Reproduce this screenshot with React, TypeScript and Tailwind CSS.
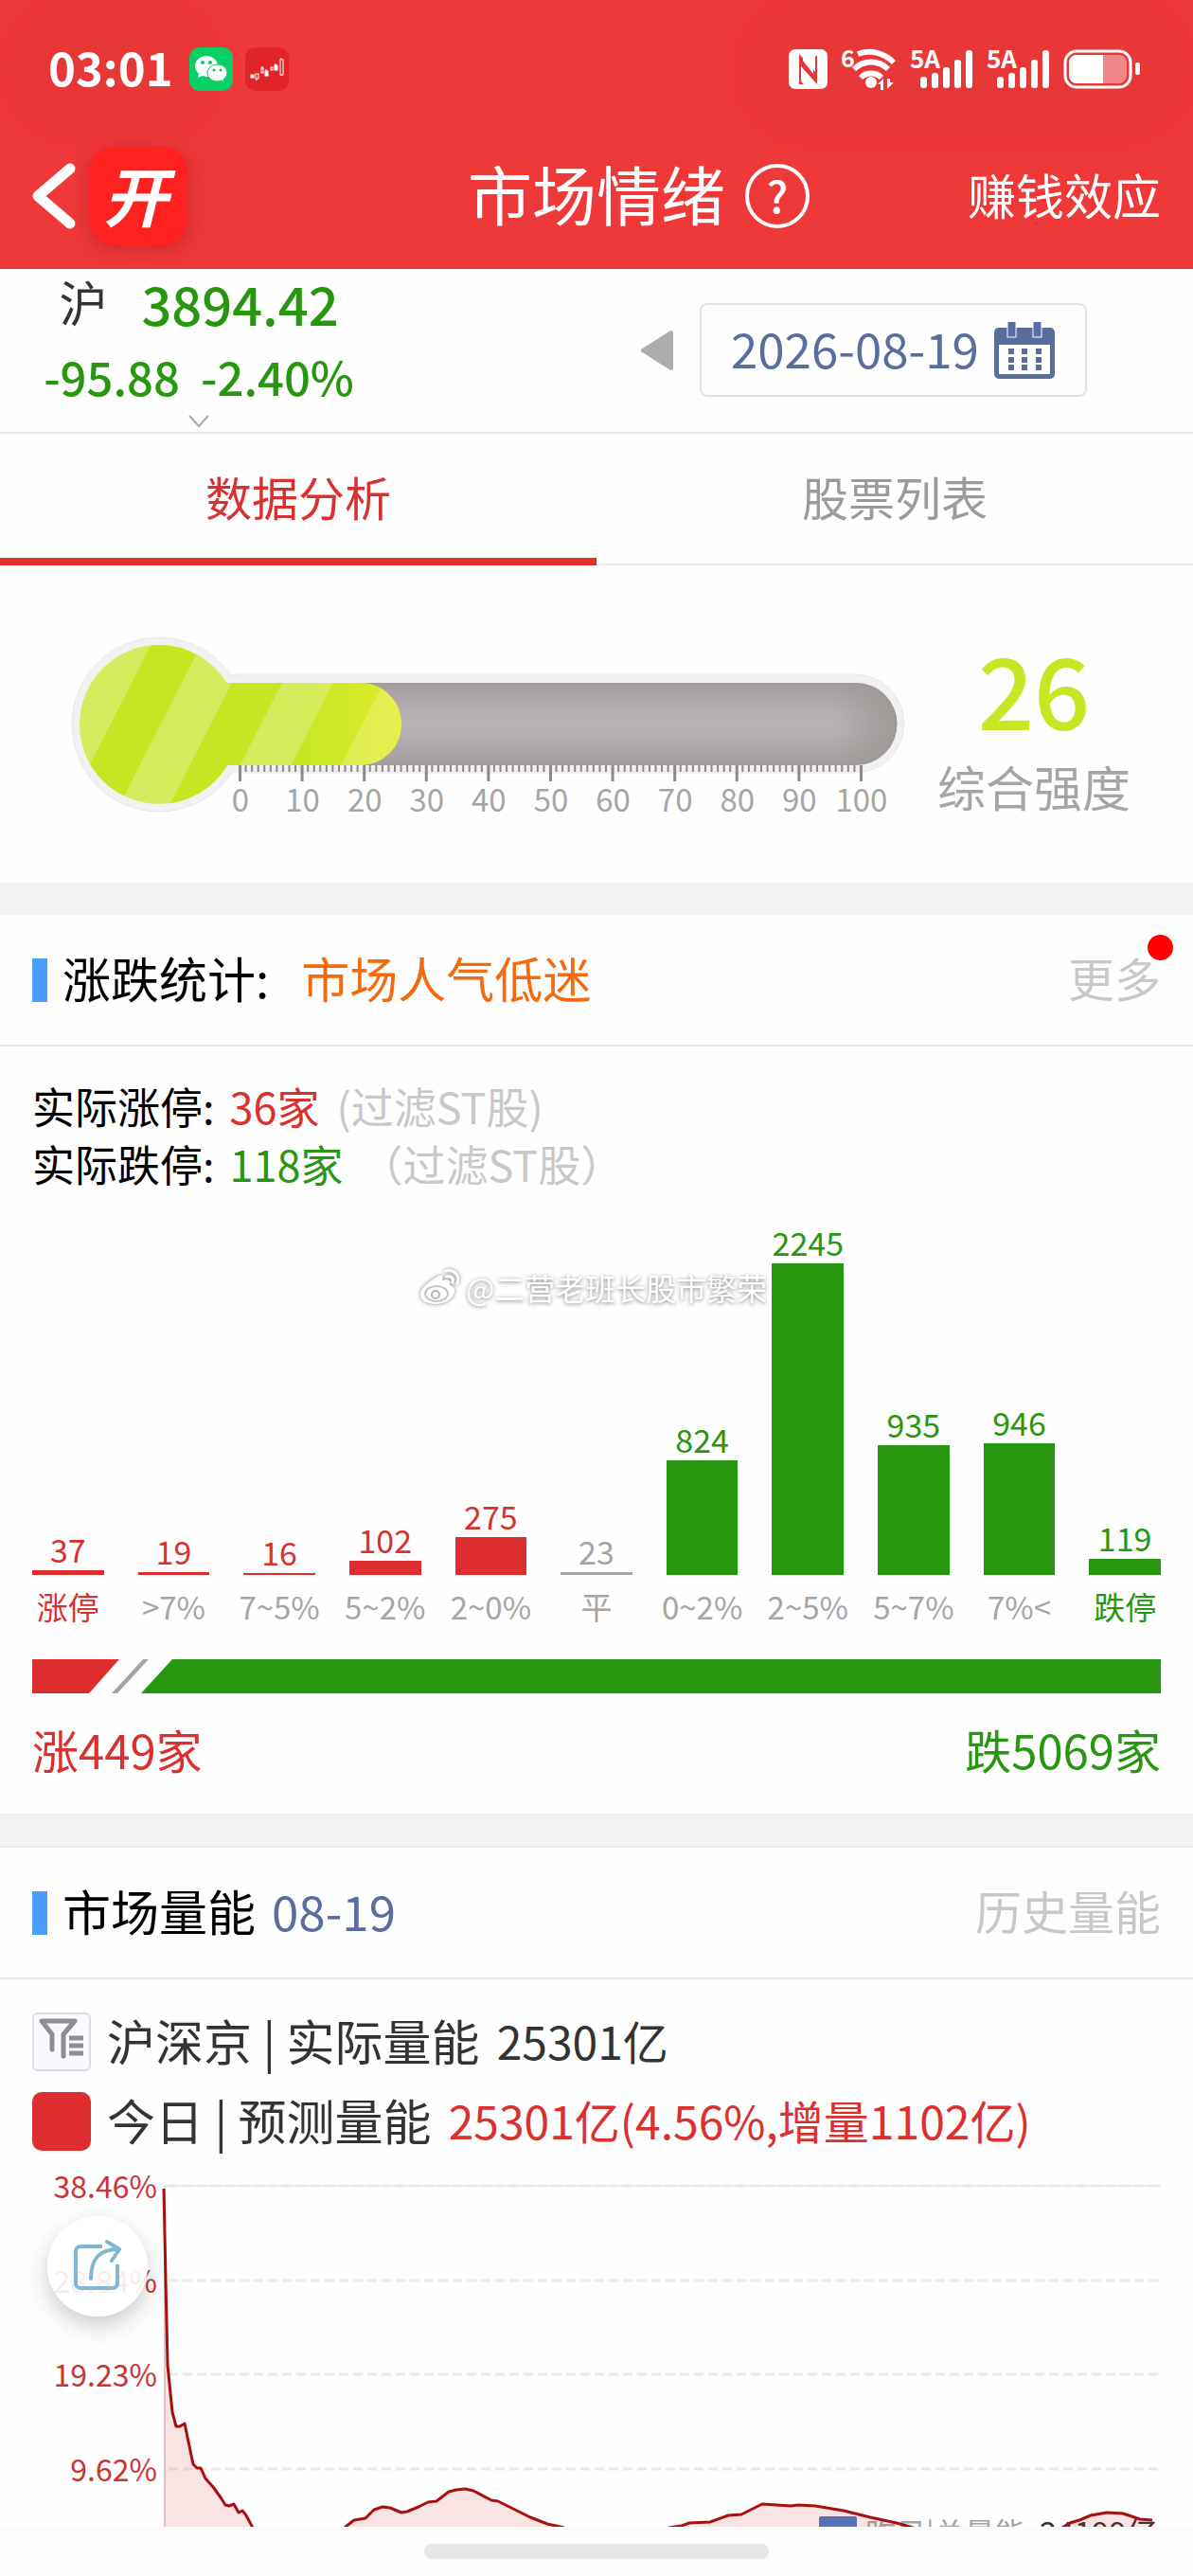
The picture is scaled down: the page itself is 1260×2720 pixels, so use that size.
import { useState } from "react";

interface Bucket {
    label: string;
    count: number;
    text: string;
    labelText: string;
    bar: string;
}

const RED = "text-[#d93030]";
const GREEN = "text-[#26970f]";
const GRAY = "text-[#a5a5a5]";

const buckets: Bucket[] = [
    { label: "涨停", count: 37, text: RED, labelText: RED, bar: "bg-[#de2d2e]" },
    { label: ">7%", count: 19, text: RED, labelText: GRAY, bar: "bg-[#de2d2e]" },
    { label: "7~5%", count: 16, text: RED, labelText: GRAY, bar: "bg-[#de2d2e]" },
    { label: "5~2%", count: 102, text: RED, labelText: GRAY, bar: "bg-[#de2d2e]" },
    { label: "2~0%", count: 275, text: RED, labelText: GRAY, bar: "bg-[#de2d2e]" },
    { label: "平", count: 23, text: GRAY, labelText: GRAY, bar: "bg-[#a5a5a5]" },
    { label: "0~2%", count: 824, text: GREEN, labelText: GRAY, bar: "bg-[#26970f]" },
    { label: "2~5%", count: 2245, text: GREEN, labelText: GRAY, bar: "bg-[#26970f]" },
    { label: "5~7%", count: 935, text: GREEN, labelText: GRAY, bar: "bg-[#26970f]" },
    { label: "7%<", count: 946, text: GREEN, labelText: GRAY, bar: "bg-[#26970f]" },
    { label: "跌停", count: 119, text: GREEN, labelText: GREEN, bar: "bg-[#26970f]" },
];

const MAX_COUNT = 2245;
const MAX_BAR = 329;

const tabs = ["数据分析", "股票列表"];

const gridLines = [
    { y: 37, label: "38.46%" },
    { y: 137, label: "28.84%" },
    { y: 236, label: "19.23%" },
    { y: 336, label: "9.62%" },
];

// Forecast curve, the parts that rise above the fold
const curves = [
    "173,40 175,136 177,226 182,276 186,291 190,291 195,288 204,331 208,335 212,335 217,346 225,355 233,366 238,374 242,375 247,373 252,382 256,380 260,385 268,400",
    "362,400 365,397 374,390 386,388 395,379 404,376 412,377 424,382 430,381 442,376 452,371 461,370 474,360 482,358 491,357 500,359 519,369 526,370 542,378 560,387 578,394 596,398",
    "706,398 720,396 728,393 750,392 769,385 783,384 805,373 835,375 843,374 861,375 891,380 919,387 947,393 968,399",
    "1120,399 1130,393 1140,390 1152,385 1169,382 1186,383 1204,389 1217,390",
];

// Closes a curve down to the bottom edge so it can be filled
function areaUnder(points: string) {
    const pairs = points.split(" ");
    const first = pairs[0].split(",")[0];
    const last = pairs[pairs.length - 1].split(",")[0];
    return `${points} ${last},400 ${first},400`;
}

function NfcIcon() {
    return (
        <svg width="41" height="42" viewBox="0 0 41 42" aria-label="NFC">
            <rect width="41" height="42" rx="7" fill="#fff" />
            <path d="M11 37V5l17 19V8l2-2v31L13 18v16l3 3z" fill="#e33636" />
            <path d="M15 12l11 14v-4L15 8z" fill="#fff" />
        </svg>
    );
}

function WifiIcon() {
    return (
        <svg width="59" height="44" viewBox="0 0 59 44" className="overflow-visible" aria-label="Wi-Fi 6">
            <text x="0" y="20" fontSize="25" fontWeight="700" fill="#fff">6</text>
            <g fill="none" stroke="#fff" strokeWidth="6">
                <path d="M18 6c14-5 28-1 38 9" />
                <path d="M14 22c10-10 26-10 36 0" />
                <path d="M21 31c6-6 16-6 22 0" />
            </g>
            <circle cx="32" cy="36" r="6" fill="#fff" />
            <path d="M45 32v12h-3v-6h-3zM49 32v11l7-7h-4v-4z" fill="#fff" />
        </svg>
    );
}

function SignalIcon() {
    return (
        <svg width="67" height="42" viewBox="0 0 67 42" className="overflow-visible" aria-label="5A">
            <text x="0" y="20" fontSize="26" fontWeight="700" fill="#fff">5A</text>
            <g fill="#fff">
                <rect x="11" y="29" width="7" height="12" rx="3" />
                <rect x="23" y="25" width="7" height="16" rx="3" />
                <rect x="35" y="19" width="7" height="22" rx="3" />
                <rect x="47" y="11" width="7" height="30" rx="3" />
                <rect x="59" y="1" width="7" height="40" rx="3" />
            </g>
        </svg>
    );
}

function BatteryIcon() {
    return (
        <svg width="82" height="42" viewBox="0 0 82 42" aria-label="电量 60%">
            <rect x="2" y="2" width="69" height="38" rx="12" fill="none" stroke="#fff" strokeWidth="3" />
            <rect x="6" y="6" width="61" height="30" rx="8" fill="#fff" opacity="0.4" />
            <path d="M14 6h28v30H14a8 8 0 0 1-8-8V14a8 8 0 0 1 8-8z" fill="#fff" />
            <rect x="76" y="14" width="5" height="13" rx="2" fill="#fff" />
        </svg>
    );
}

function WechatIcon() {
    return (
        <svg width="46" height="46" viewBox="0 0 46 46" aria-label="微信">
            <rect width="46" height="46" rx="11" fill="#07d065" />
            <path d="M18 9c-7 0-12 5-12 11 0 3 2 6 4 8l-1 4 5-2c1 0 3 1 5 1 6 0 11-5 11-11S25 9 18 9z" fill="#fff" />
            <path d="M30 18c-6 0-11 4-11 9s5 9 11 9l4-1 3 2-1-3c2-2 4-4 4-7 0-5-4-9-10-9z" fill="#fff" stroke="#07c862" strokeWidth="1" />
            <g fill="#07c862">
                <circle cx="14" cy="16" r="2" />
                <circle cx="22" cy="16" r="2" />
                <circle cx="26" cy="24" r="1.5" />
                <circle cx="33" cy="24" r="1.5" />
            </g>
        </svg>
    );
}

function CandleIcon() {
    return (
        <svg width="46" height="46" viewBox="0 0 46 46" aria-label="行情">
            <rect width="46" height="46" rx="11" fill="#e02427" />
            <g stroke="#fff" strokeWidth="1" fill="#fff">
                <rect x="6" y="29" width="3" height="3" />
                <rect x="11" y="28" width="3" height="5" fill="none" />
                <rect x="17" y="22" width="2" height="5" fill="none" />
                <rect x="21" y="25" width="3" height="5" />
                <rect x="27" y="21" width="2" height="3" fill="none" />
                <rect x="31" y="19" width="3" height="5" />
                <rect x="37" y="13" width="3" height="16" fill="none" />
                <path d="M12 33v2M18 20v2M22 23v2M32 17v2M38 11v2M38 29v1" />
            </g>
        </svg>
    );
}

function CalendarIcon() {
    return (
        <svg width="64" height="60" viewBox="0 0 64 60" aria-hidden="true">
            <rect y="6" width="64" height="54" rx="5" fill="#5b6c9e" />
            <rect x="5" y="24" width="54" height="31" fill="#fff" />
            <rect x="14" y="-2" width="9" height="18" fill="#5b6c9e" stroke="#fff" strokeWidth="1" />
            <rect x="41" y="-2" width="9" height="18" fill="#5b6c9e" stroke="#fff" strokeWidth="1" />
            {[28, 37, 45].map((y) =>
                [15, 29, 44].map((x) => <rect key={`${x}-${y}`} x={x} y={y} width="6" height="6" fill="#5b6c9e" />)
            )}
        </svg>
    );
}

function WeiboIcon() {
    return (
        <svg width="46" height="42" viewBox="0 0 46 42" className="drop-shadow-[0_0_2px_rgba(0,0,0,0.5)]" aria-hidden="true">
            <path d="M17 12c6-5 10-4 8 2 6-2 10 0 8 5 4 1 6 4 5 8-2 7-11 12-20 12S1 35 2 28c0-5 8-12 15-16z" fill="#fff" />
            <ellipse cx="19" cy="28" rx="12" ry="8" fill="none" stroke="#c4c4c4" strokeWidth="2" />
            <circle cx="18" cy="29" r="4" fill="none" stroke="#b4b4b4" strokeWidth="2" />
            <path d="M29 4c9-2 15 5 12 13M30 10c5-1 7 2 6 6" fill="none" stroke="#fff" strokeWidth="3" strokeLinecap="round" />
        </svg>
    );
}

function ShareIcon() {
    return (
        <svg width="50" height="54" viewBox="0 0 50 54" fill="none" stroke="#7fb6d3" strokeWidth="4" strokeLinecap="round" strokeLinejoin="round" aria-hidden="true">
            <path d="M30 8H7a5 5 0 0 0-5 5v34a5 5 0 0 0 5 5h34a5 5 0 0 0 5-5V27" strokeLinecap="butt" />
            <path d="M18 42c0-20 8-31 29-31M35 3l13 8-8 12" />
        </svg>
    );
}

function FilterIcon() {
    return (
        <svg width="50" height="48" viewBox="0 0 50 48" fill="none" stroke="#8e8e8e" strokeWidth="5" aria-hidden="true">
            <path d="M15 35V19L4 5h35L27 19v23" strokeLinejoin="round" strokeLinecap="round" />
            <path d="M33 23h15M33 31h15M33 39h15" />
        </svg>
    );
}

function Thermometer({ value }: { value: number }) {
    const end = 253 + value * 6.56;
    return (
        <svg viewBox="70 667 890 195" className="min-w-0 flex-1 overflow-visible" role="img" aria-label={`综合强度 ${value}`}>
            <defs>
                <linearGradient id="tube" x1="0" y1="0" x2="0" y2="1">
                    <stop offset="0" stopColor="#a49f9e" />
                    <stop offset="0.4" stopColor="#b6b2b1" />
                    <stop offset="0.6" stopColor="#b6b2b1" />
                    <stop offset="1" stopColor="#a49f9e" />
                </linearGradient>
                <linearGradient id="tubeEnd">
                    <stop offset="0" stopColor="#999392" stopOpacity="0" />
                    <stop offset="1" stopColor="#999392" stopOpacity="0.8" />
                </linearGradient>
                <linearGradient id="warm">
                    <stop offset="0" stopColor="#fff23a" stopOpacity="0" />
                    <stop offset="1" stopColor="#fff23a" stopOpacity="0.5" />
                </linearGradient>
                <clipPath id="liquid">
                    <circle cx="168" cy="765" r="84" />
                    <path d={`M200 721H${end - 43}a43 43 0 0 1 0 87H200z`} />
                </clipPath>
            </defs>
            <circle cx="168" cy="765" r="92" fill="#f1f1f1" stroke="#e8e8e8" />
            <rect x="200" y="712" width="755" height="104" rx="52" fill="#f1f1f1" stroke="#e8e8e8" />
            <circle cx="168" cy="765" r="91" fill="#f1f1f1" />
            <path d="M200 721H904a43 43 0 0 1 0 87H200z" fill="url(#tube)" />
            <path d="M880 721H904a43 43 0 0 1 0 87H880z" fill="url(#tubeEnd)" />
            <g clipPath="url(#liquid)">
                <rect x="80" y="670" width="400" height="190" fill="#d4ed5c" />
                {[139, 245, 352].map((x) => (
                    <path key={x} d={`M${x + 26} 670h53L${x - 18} 860h-53z`} fill="#c6e824" />
                ))}
                <rect x="320" y="721" width="110" height="87" fill="url(#warm)" />
            </g>
            {Array.from({ length: 101 }, (_, i) => (
                <rect key={i} x={252 + i * 6.56} y="808" width={i % 10 ? 2 : 3} height={i % 10 ? 7 : 17} fill="#8f8888" />
            ))}
            {Array.from({ length: 11 }, (_, i) => (
                <text key={i} x={254 + i * 65.6} y="857" fontSize="33" textAnchor="middle" fill="#a5a5a5">
                    {i * 10}
                </text>
            ))}
        </svg>
    );
}

function SectionHeader({ title, extra, more, dot }: { title: string; extra: React.ReactNode; more: string; dot?: boolean }) {
    return (
        <div className="flex h-[139px] items-center border-b-2 border-[#eaeaea] px-[34px]">
            <span className="h-[46px] w-4 bg-[#4a9dfc]" />
            <div className="flex flex-1 items-center pb-1.5 pl-4 leading-[60px]">
                <h2 className="text-[51px] text-black">{title}</h2>
                {extra}
                <a href="#more" className="relative ml-auto text-[49px] text-[#c8c8c8]">
                    {more}
                    {dot && <span className="absolute -right-[13px] -top-[15px] size-[27px] rounded-full bg-[#ff0000]" />}
                </a>
            </div>
        </div>
    );
}

export default function App() {
    const [activeTab, setActiveTab] = useState(0);

    return (
        <div className="min-h-screen bg-[#fefefe] font-['Noto_Sans_CJK_SC',sans-serif] text-[#333]">
            <header className="bg-[#ef3838] text-white">
                {/* Status bar */}
                <div className="flex h-[130px] items-center justify-between pt-4 pl-[51px] pr-[55px]">
                    <div className="flex items-center gap-[13px]">
                        <span className="rounded-full bg-[#b43232]/10 pb-1.5 pr-1 text-[49px] font-bold leading-[50px] shadow-[0_0_40px_20px_rgba(180,50,50,0.16)]">
                            03:01
                        </span>
                        <WechatIcon />
                        <CandleIcon />
                    </div>
                    <div className="flex items-center gap-[14px] rounded-full bg-[#b43232]/10 shadow-[0_0_50px_20px_rgba(180,50,50,0.16)]">
                        <NfcIcon />
                        <WifiIcon />
                        <SignalIcon />
                        <SignalIcon />
                        <BatteryIcon />
                    </div>
                </div>

                {/* Title bar */}
                <div className="grid h-[154px] grid-cols-[1fr_auto_1fr] items-center px-[34px]">
                    <div className="flex items-center gap-[14px]">
                        <button type="button" aria-label="返回">
                            <svg width="46" height="70" viewBox="0 0 46 70" fill="none" stroke="#fff" strokeWidth="11" strokeLinecap="round" strokeLinejoin="round">
                                <path d="M40 6L6 35l34 29" />
                            </svg>
                        </button>
                        <span className="flex size-[104px] items-center justify-center rounded-[26px] bg-[#ff2020] pb-1 pr-1.5 text-[68px] font-bold italic leading-[70px] shadow-[0_4px_16px_rgba(120,20,20,0.35)]">
                            开
                        </span>
                    </div>
                    <h1 className="pb-1.5 text-[68px] leading-[80px]">市场情绪</h1>
                    <div className="flex items-center justify-between pl-[21px]">
                        <button type="button" aria-label="帮助" className="size-[68px] rounded-full border-4 border-white pb-1 text-[46px] font-medium leading-[52px]">
                            ?
                        </button>
                        <a href="#effect" className="pb-1 text-[51px] leading-[60px]">赚钱效应</a>
                    </div>
                </div>
            </header>

            {/* Index and date */}
            <section className="flex h-[174px] items-start border-b-2 border-[#eaeaea]">
                <div className="flex w-1/3 flex-col items-center text-[#26970f]">
                    <div className="flex items-center gap-9 text-[56px] font-medium leading-[72px]">
                        <span className="pb-1 text-[51px] font-normal leading-[68px] text-[#333]">沪</span>
                        3894.42
                    </div>
                    <div className="flex gap-[22px] text-[49px] font-medium leading-[82px]">
                        <span>-95.88</span>
                        <span>-2.40%</span>
                    </div>
                    <svg width="22" height="14" viewBox="0 0 22 14" fill="none" stroke="#aaa" strokeWidth="2" aria-hidden="true">
                        <path d="M1 1l10 11L21 1" />
                    </svg>
                </div>
                <div className="flex flex-1 items-center justify-end gap-[27px] pr-[112px] pt-9">
                    <button type="button" aria-label="前一天">
                        <svg width="35" height="44" viewBox="0 0 35 44" fill="#adadad" stroke="#adadad" strokeWidth="4" strokeLinejoin="round">
                            <path d="M2 22L32 3v38z" />
                        </svg>
                    </button>
                    <button type="button" className="flex h-[99px] w-[409px] items-center justify-between rounded-lg border-2 border-[#e2e2e2] pl-[31px] pr-8 text-[51px] leading-[60px] text-[#5b6c9e]">
                        <span className="pb-1.5">2026-08-19</span>
                        <CalendarIcon />
                    </button>
                </div>
            </section>

            {/* Tabs */}
            <nav className="grid h-[139px] grid-cols-2 text-[49px] leading-[60px]">
                {tabs.map((tab, index) => (
                    <button
                        key={tab}
                        type="button"
                        onClick={() => setActiveTab(index)}
                        className={
                            activeTab === index
                                ? "border-b-8 border-[#e03030] text-[#d93030]"
                                : "border-b-2 border-[#eaeaea] pb-1.5 text-[#9b9b9b]"
                        }
                    >
                        {tab}
                    </button>
                ))}
            </nav>

            {/* Overall strength */}
            <section className="flex items-start gap-[30px] py-[70px] pl-[70px] pr-[66px]">
                <Thermometer value={26} />
                <div className="flex flex-col items-center">
                    <span className="text-[104px] font-medium leading-[118px] text-[#c6e824]">26</span>
                    <span className="mt-[13px] text-[51px] leading-[64px] text-[#a5a5a5]">综合强度</span>
                </div>
            </section>

            {/* Rise and fall statistics */}
            <section className="border-t-[34px] border-[#f2f2f2]">
                <SectionHeader
                    title="涨跌统计:"
                    extra={<span className="ml-[34px] text-[51px] text-[#f56a0c]">市场人气低迷</span>}
                    more="更多"
                    dot
                />
                <div className="px-[34px] pb-9 pt-8">
                    <p className="flex text-[45px] leading-[61px] text-black">
                        实际涨停:
                        <span className="ml-4 text-[#d93030]">36家</span>
                        <span className="ml-[18px] text-[#c8c8c8]">(过滤ST股)</span>
                    </p>
                    <p className="flex text-[45px] leading-[61px] text-black">
                        实际跌停:
                        <span className="ml-4 text-[#26970f]">118家</span>
                        <span className="ml-[18px] text-[#c8c8c8]">（过滤ST股）</span>
                    </p>

                    <div className="relative mt-[33px]">
                        <div className="grid grid-cols-11 items-end gap-9">
                            {buckets.map((bucket) => (
                                <div key={bucket.label} className="flex flex-col items-center whitespace-nowrap text-[34px] leading-10">
                                    <span className={`mb-0.5 ${bucket.text}`}>{bucket.count}</span>
                                    <div
                                        className={`w-full ${bucket.bar}`}
                                        style={{ height: (bucket.count / MAX_COUNT) * MAX_BAR }}
                                    />
                                    <span className={`mt-[13px] text-[33px] ${bucket.labelText}`}>{bucket.label}</span>
                                </div>
                            ))}
                        </div>
                        <div className="absolute left-[408px] top-[46px] flex items-center text-[32px] leading-10 text-white [text-shadow:0_1px_4px_rgba(0,0,0,0.5)]">
                            <WeiboIcon />
                            <span className="ml-1">@二营老班长股市繁荣</span>
                        </div>
                    </div>

                    <div className="mt-9 flex h-9">
                        <div className="w-[92px] bg-[#de2d2e] [clip-path:polygon(0_0,100%_0,60px_100%,0_100%)]" />
                        <div className="-ml-2 w-[39px] bg-[#a5a5a5] [clip-path:polygon(33px_0,100%_0,6px_100%,0_100%)]" />
                        <div className="-ml-2 flex-1 bg-[#26970f] [clip-path:polygon(33px_0,100%_0,100%_100%,0_100%)]" />
                    </div>
                    <div className="mt-[27px] flex justify-between text-[49px] leading-[64px]">
                        <span className="text-[#d93030]">涨449家</span>
                        <span className="text-[#26970f]">跌5069家</span>
                    </div>
                </div>
            </section>

            {/* Market volume */}
            <section>
                <div className="h-9 border-b-2 border-[#eaeaea] bg-[#f2f2f2]" />
                <SectionHeader
                    title="市场量能"
                    extra={<span className="ml-[17px] text-[51px] text-[#5b6c9e]">08-19</span>}
                    more="历史量能"
                />
                <div className="flex flex-col gap-[22px] px-[34px] pt-[35px] text-[51px] leading-[56px]">
                    <div className="flex h-[62px] items-center">
                        <button type="button" aria-label="筛选" className="flex size-[62px] items-center justify-center rounded-md border-2 border-[#dcdce2] bg-[#f8f8fe] pb-1.5">
                            <FilterIcon />
                        </button>
                        <span className="ml-[17px] pb-1">沪深京 | 实际量能</span>
                        <span className="ml-[18px] pb-1 text-[48px]">25301亿</span>
                    </div>
                    <div className="flex h-[62px] items-center">
                        <span className="size-[62px] rounded-[10px] bg-[#de2d2e]" />
                        <span className="ml-[17px] pb-1">今日 | 预测量能</span>
                        <span className="ml-[18px] pb-1 text-[48px] text-[#d93030]">25301亿(4.56%,增量1102亿)</span>
                    </div>
                </div>

                <div className="relative overflow-hidden">
                    <svg viewBox="0 0 1260 397" className="block w-full" role="img" aria-label="今日预测量能走势">
                        <path d="M173 37H1226" stroke="#eaeaea" strokeWidth="2" />
                        <path d="M174 37V397" stroke="#e0dada" strokeWidth="2" />
                        {gridLines.map((line) => (
                            <g key={line.label}>
                                <path d={`M178 ${line.y}H1226`} stroke="#eaeaea" strokeWidth="3" strokeDasharray="10 5" />
                                <text x="166" y={line.y + 13} fontSize="32" textAnchor="end" fill="#cc3333">
                                    {line.label}
                                </text>
                            </g>
                        ))}
                        <rect x="865" y="386" width="40" height="30" rx="2" fill="#3f7bc8" />
                        <text x="914" y="416" fontSize="32" fill="#a5a5a5">昨日|总量能</text>
                        <text x="1098" y="416" fontSize="33" fill="#333">24199亿</text>
                        {curves.map((points) => (
                            <g key={points}>
                                <polygon points={areaUnder(points)} fill="#de2d2e" opacity="0.13" />
                                <polyline points={points} fill="none" stroke="#a81010" strokeWidth="3" strokeLinejoin="round" />
                            </g>
                        ))}
                    </svg>
                    <button type="button" aria-label="分享" className="absolute left-[50px] top-[69px] flex size-[106px] items-center justify-center rounded-full bg-white/90 pb-1 shadow-[0_10px_24px_rgba(0,0,0,0.2)]">
                        <ShareIcon />
                    </button>
                </div>
            </section>

            {/* Gesture bar */}
            <footer className="flex h-[52px] items-center justify-center bg-[#fbfbfb]">
                <span className="h-4 w-[364px] rounded-full bg-[#e6e6e6]" />
            </footer>
        </div>
    );
}
